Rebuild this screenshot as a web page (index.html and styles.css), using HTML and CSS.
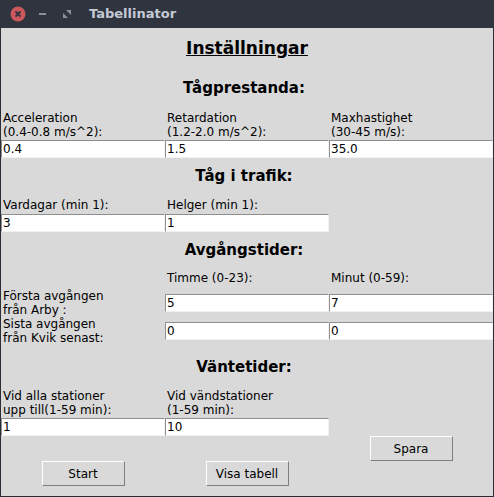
FILE: index.html
```html
<!DOCTYPE html>
<html lang="sv">
<head>
<meta charset="utf-8">
<title>Tabellinator</title>
<link rel="stylesheet" href="styles.css">
</head>
<body>
<div class="window">
  <div class="titlebar">
    <svg class="tb-close" width="16" height="16" viewBox="0 0 16 16"><circle cx="8" cy="8" r="7.5" fill="#cc575d"/><path d="M5.5 5.5 L10.5 10.5 M10.5 5.5 L5.5 10.5" stroke="#2f343f" stroke-width="1.8"/></svg>
    <svg class="tb-min" width="7" height="2" viewBox="0 0 7 2"><rect width="7" height="2" fill="#8a909c"/></svg>
    <svg class="tb-max" width="8" height="8" viewBox="0 0 8 8"><polygon points="3,0 8,0 8,5" fill="#8a909c"/><polygon points="0,3 5,8 0,8" fill="#8a909c"/></svg>
    <span class="tb-title">Tabellinator</span>
  </div>
  <div class="content">
    <div class="h1"><span>Inställningar</span></div>

    <div class="h2 sec-a">Tågprestanda:</div>
    <div class="grid3 lbl-row top-a">
      <div class="lbl">Acceleration<br>(0.4-0.8 m/s^2):</div>
      <div class="lbl">Retardation<br>(1.2-2.0 m/s^2):</div>
      <div class="lbl">Maxhastighet<br>(30-45 m/s):</div>
    </div>
    <div class="grid3 entry-row">
      <input class="entry" type="text" value="0.4">
      <input class="entry" type="text" value="1.5">
      <input class="entry" type="text" value="35.0">
    </div>

    <div class="h2 sec-b">Tåg i trafik:</div>
    <div class="grid3 lbl-row top-b">
      <div class="lbl">Vardagar (min 1):</div>
      <div class="lbl">Helger (min 1):</div>
    </div>
    <div class="grid3 entry-row gap2">
      <input class="entry" type="text" value="3">
      <input class="entry" type="text" value="1">
    </div>

    <div class="h2 sec-b">Avgångstider:</div>
    <div class="grid3 lbl-row top-c">
      <div class="lbl col2">Timme (0-23):</div>
      <div class="lbl">Minut (0-59):</div>
    </div>
    <div class="grid3 time-row first">
      <div class="lbl">Första avgången<br>från Arby :</div>
      <input class="entry" type="text" value="5">
      <input class="entry" type="text" value="7">
    </div>
    <div class="grid3 time-row">
      <div class="lbl">Sista avgången<br>från Kvik senast:</div>
      <input class="entry" type="text" value="0">
      <input class="entry" type="text" value="0">
    </div>

    <div class="h2 sec-d">Väntetider:</div>
    <div class="grid3 lbl-row top-d">
      <div class="lbl">Vid alla stationer<br>upp till(1-59 min):</div>
      <div class="lbl">Vid vändstationer<br>(1-59 min):</div>
    </div>
    <div class="grid3 entry-row">
      <input class="entry" type="text" value="1">
      <input class="entry" type="text" value="10">
    </div>

    <div class="grid3 btn-row">
      <button class="btn col3" type="button">Spara</button>
    </div>
    <div class="grid3 btn-row">
      <button class="btn" type="button">Start</button>
      <button class="btn" type="button">Visa tabell</button>
    </div>
  </div>
</div>
</body>
</html>
```

FILE: styles.css
```css
* { box-sizing: border-box; }

html, body {
  margin: 0;
  padding: 0;
}

body {
  width: 494px;
  height: 497px;
  overflow: hidden;
  font-family: "DejaVu Sans", "Liberation Sans", sans-serif;
  background: #2f343f;
}

.window {
  width: 494px;
  height: 497px;
  display: flex;
  flex-direction: column;
}

.titlebar {
  height: 28px;
  flex: none;
  background: #2f343f;
  display: flex;
  align-items: center;
  padding-left: 10px;
}

.tb-close { flex: none; }
.tb-min { flex: none; margin-left: 13px; }
.tb-max { flex: none; margin-left: 17px; }

.tb-title {
  margin-left: 18px;
  font-size: 13px;
  font-weight: bold;
  color: #c4cad6;
  line-height: 16px;
}

.content {
  flex: 1;
  background: #d9d9d9;
  border: 1px solid #2b2e36;
  border-top: 0;
  display: flex;
  flex-direction: column;
  color: #000;
}

.h1 {
  margin-top: 10px;
  height: 20px;
  line-height: 20px;
  font-size: 17px;
  font-weight: bold;
  text-align: center;
}

.h1 span {
  text-decoration: underline;
}

.h2 {
  height: 20px;
  line-height: 20px;
  font-size: 15px;
  font-weight: bold;
  text-align: center;
  padding-right: 6px;
}

.sec-a { margin-top: 20px; }
.sec-b { margin-top: 8px; }
.sec-d { margin-top: 12px; }

.grid3 {
  display: grid;
  grid-template-columns: repeat(3, 164px);
}

.lbl {
  font-size: 12px;
  line-height: 14px;
  padding-left: 2px;
  white-space: nowrap;
}

.col2 { grid-column: 2; }
.col3 { grid-column: 3; }

.top-a { margin-top: 13px; }
.top-b { margin-top: 12px; }
.top-c { margin-top: 11px; }
.top-d { margin-top: 12px; }

.entry-row { margin-top: 1px; }
.entry-row.gap2 { margin-top: 2px; }

.entry {
  display: block;
  width: 164px;
  height: 18px;
  margin: 0;
  padding: 0 1px;
  font-family: "DejaVu Sans", sans-serif;
  font-size: 12px;
  line-height: 16px;
  color: #000;
  background: #ffffff;
  border-style: solid;
  border-width: 1px;
  border-color: #8f8f8f #f2f2f2 #f2f2f2 #8f8f8f;
  border-radius: 0;
  outline: none;
}

.time-row {
  height: 28px;
  align-items: center;
}

.time-row.first { margin-top: 4px; }

.btn-row {
  height: 25px;
  align-items: center;
}

.btn {
  justify-self: center;
  width: 83px;
  height: 25px;
  margin: 0;
  padding: 0;
  font-family: "DejaVu Sans", sans-serif;
  font-size: 12px;
  color: #000;
  background: #d9d9d9;
  border-style: solid;
  border-width: 1px;
  border-color: #ffffff #7f7f7f #7f7f7f #ffffff;
  border-radius: 0;
}
```
